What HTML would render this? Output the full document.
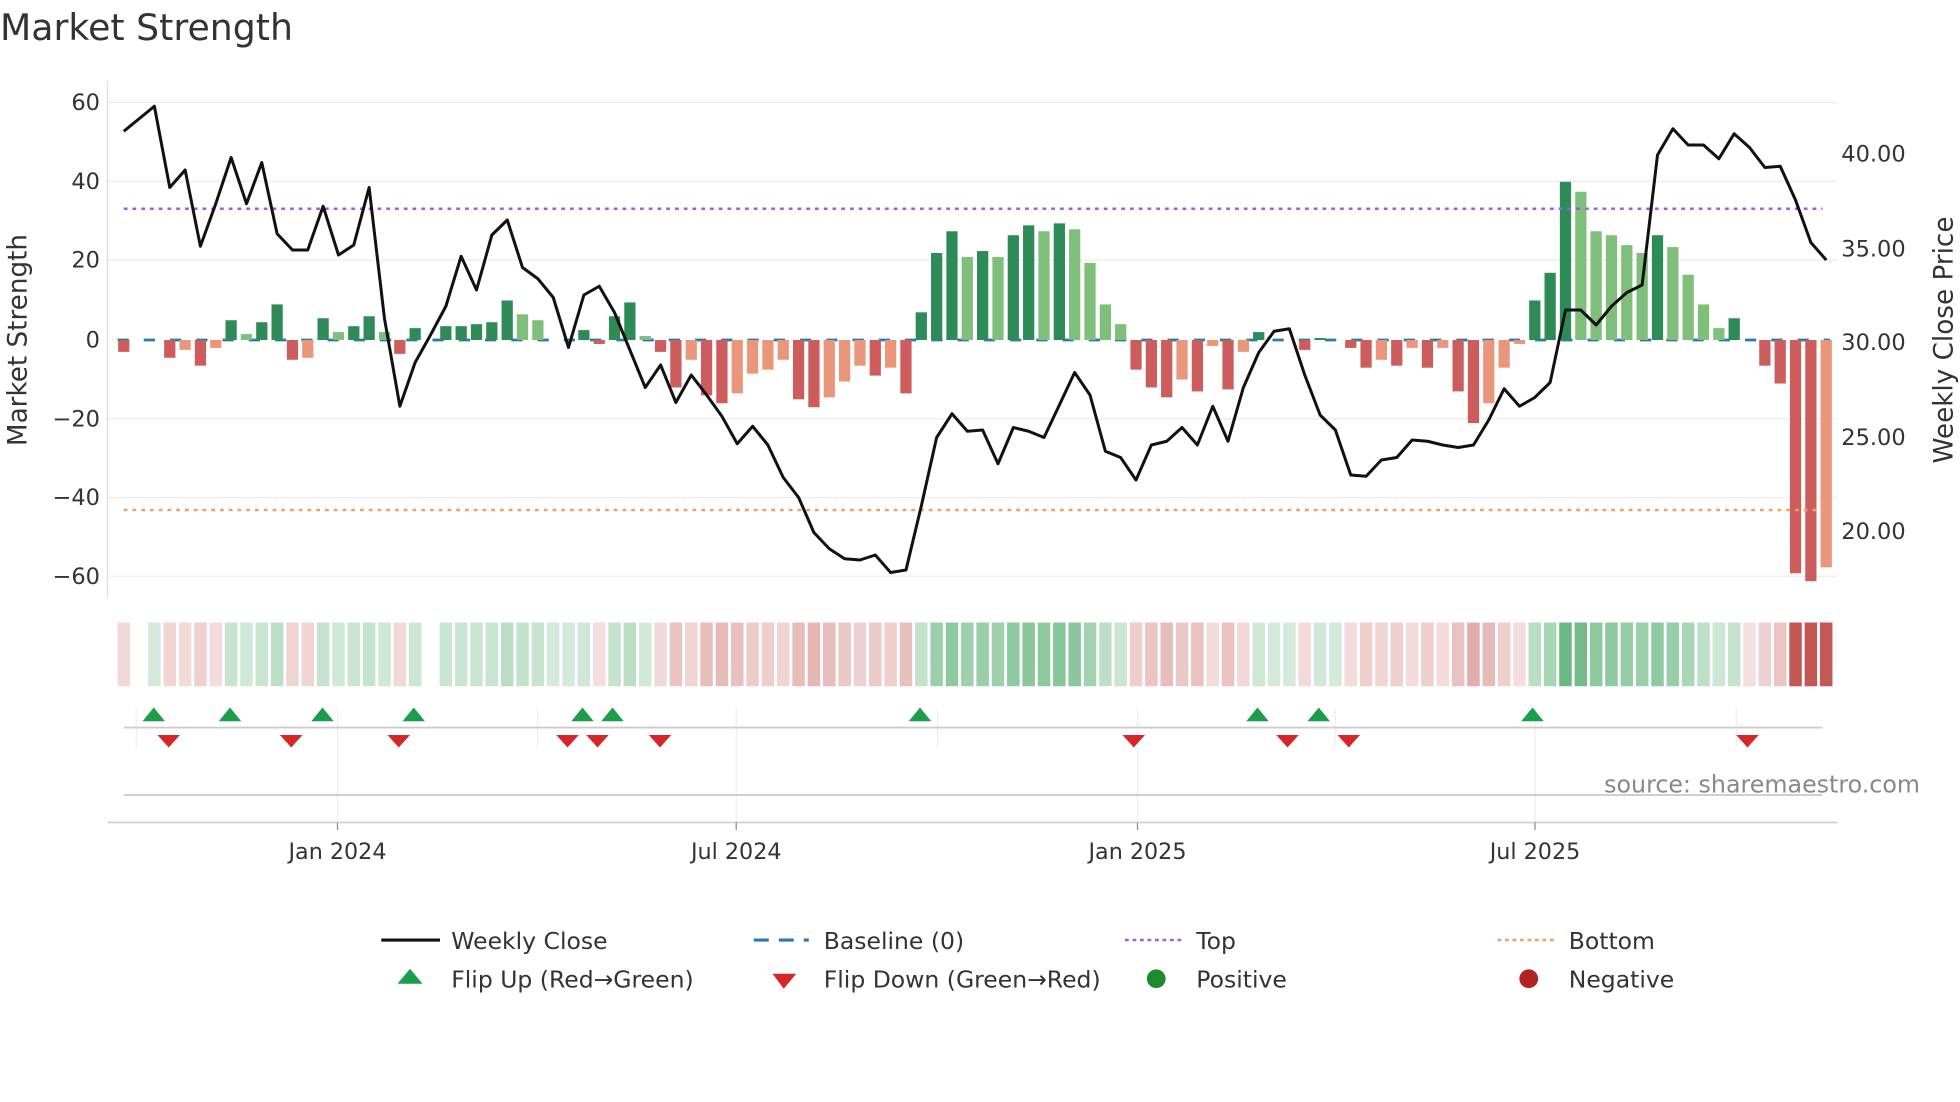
<!DOCTYPE html>
<html><head><meta charset="utf-8"><style>
html,body{margin:0;padding:0;background:#fff;}
svg{display:block;font-family:"DejaVu Sans","Liberation Sans",sans-serif;}
</style></head><body>
<svg id="s" width="1960" height="1102" viewBox="0 0 1568 881.6" xmlns="http://www.w3.org/2000/svg">
<rect width="1568" height="882" fill="#fff"/>
<text x="0" y="32" font-size="29" fill="#333">Market Strength</text>
<g stroke="#ebebeb" stroke-width="1">
<line x1="86" x2="1470" y1="82" y2="82"/><line x1="86" x2="1470" y1="145" y2="145"/>
<line x1="86" x2="1470" y1="208" y2="208"/><line x1="86" x2="1470" y1="335" y2="335"/>
<line x1="86" x2="1470" y1="398" y2="398"/><line x1="86" x2="1470" y1="461" y2="461"/>
</g>
<line x1="86" x2="86" y1="65" y2="478" stroke="#ddd"/>
<g font-size="18" fill="#333" text-anchor="end">
<text x="80" y="88">60</text><text x="80" y="151">40</text><text x="80" y="214">20</text>
<text x="80" y="278">0</text><text x="80" y="341">−20</text><text x="80" y="404">−40</text><text x="80" y="467">−60</text>
</g>
<g font-size="18" fill="#333">
<text x="1473" y="129">40.00</text><text x="1473" y="205">35.00</text><text x="1473" y="280">30.00</text>
<text x="1473" y="356">25.00</text><text x="1473" y="431">20.00</text>
</g>
<text transform="translate(21,272) rotate(-90)" font-size="21" fill="#333" text-anchor="middle">Market Strength</text>
<text transform="translate(1562,272) rotate(-90)" font-size="21" fill="#333" text-anchor="middle">Weekly Close Price</text>
<g id="bars"></g>
<line x1="99" x2="1458" y1="167" y2="167" stroke="#9b5de5" stroke-width="2" stroke-dasharray="3,4"/>
<line x1="99" x2="1458" y1="408" y2="408" stroke="#f0a060" stroke-width="2" stroke-dasharray="3,4"/>
<polyline id="price" fill="none" stroke="#111" stroke-width="2.4" stroke-linejoin="round"/>
<g id="strip"></g>
<g stroke="#eee" stroke-width="1">
<line x1="109" x2="109" y1="567" y2="598"/><line x1="430" x2="430" y1="567" y2="598"/>
<line x1="750" x2="750" y1="567" y2="598"/><line x1="1068" x2="1068" y1="567" y2="598"/>
<line x1="1389" x2="1389" y1="567" y2="598"/>
<line x1="270" x2="270" y1="567" y2="658"/><line x1="589" x2="589" y1="567" y2="658"/>
<line x1="910" x2="910" y1="567" y2="658"/><line x1="1228" x2="1228" y1="567" y2="658"/>
</g>
<line x1="99" x2="1458" y1="582" y2="582" stroke="#ccc" stroke-width="1.5"/>
<line x1="99" x2="1458" y1="636" y2="636" stroke="#ccc" stroke-width="1.5"/>
<g id="flips"></g>
<text x="1536" y="634" font-size="19" fill="#888" text-anchor="end">source: sharemaestro.com</text>
<line x1="86" x2="1470" y1="658" y2="658" stroke="#ccc" stroke-width="1.2"/>
<g stroke="#888"><line x1="270" x2="270" y1="658" y2="664"/><line x1="589" x2="589" y1="658" y2="664"/><line x1="910" x2="910" y1="658" y2="664"/><line x1="1228" x2="1228" y1="658" y2="664"/></g>
<g font-size="17.8" fill="#333" text-anchor="middle">
<text x="270" y="687">Jan 2024</text><text x="589" y="687">Jul 2024</text><text x="910" y="687">Jan 2025</text><text x="1228" y="687">Jul 2025</text>
</g>
<g font-size="18.8" fill="#333">
<line x1="305" x2="352" y1="752" y2="752" stroke="#111" stroke-width="2.5"/>
<text x="361" y="759">Weekly Close</text>
<line x1="603" x2="647" y1="752" y2="752" stroke="#2a7ab0" stroke-width="2.5" stroke-dasharray="12,8"/>
<text x="659" y="759">Baseline (0)</text>
<line x1="900" x2="945" y1="752" y2="752" stroke="#9b5de5" stroke-width="2" stroke-dasharray="3,3"/>
<text x="957" y="759">Top</text>
<line x1="1198" x2="1243" y1="752" y2="752" stroke="#f0a060" stroke-width="2" stroke-dasharray="3,3"/>
<text x="1255" y="759">Bottom</text>
<polygon points="328,775 338,787 318,787" fill="#1a9e4a"/>
<text x="361" y="790">Flip Up (Red→Green)</text>
<polygon points="618,779 637,779 627,791" fill="#d62728"/>
<text x="659" y="790">Flip Down (Green→Red)</text>
<circle cx="925" cy="783" r="7.5" fill="#1e8a2e"/>
<text x="957" y="790">Positive</text>
<circle cx="1223" cy="783" r="7.5" fill="#b22222"/>
<text x="1255" y="790">Negative</text>
</g>
</svg>
<script>
var NS="http://www.w3.org/2000/svg";
function el(t,a,p){var e=document.createElementNS(NS,t);for(var k in a)e.setAttribute(k,a[k]);p.appendChild(e);return e;}
var v=[-3,0,0.3,-4.5,-2.5,-6.5,-2,5,1.5,4.5,9,-5,-4.5,5.5,2,3.5,6,2,-3.5,3,0,3.5,3.5,4,4.5,10,6.5,5,0.3,0.3,2.5,-1,6,9.5,1,-3,-12,-5,-14,-16,-13.5,-8.5,-7.5,-5,-15,-17,-14.5,-10.5,-6.5,-9,-7,-13.5,7,22,27.5,21,22.5,21,26.5,29,27.5,29.5,28,19.5,9,4,-7.5,-12,-14.5,-10,-13,-1.5,-12.5,-3,2,0.3,0.3,-2.5,0.5,0.3,-2,-7,-5,-6.5,-2,-7,-2,-13,-21,-16,-7,-1,10,17,40,37.5,27.5,26.5,24,22,26.5,23.5,16.5,9,3,5.5,-0.3,-6.5,-11,-59,-61,-57.5];
var py=[105,95,85,150,136,197,163,126,163,130,187,200,200,165,204,196,150,255,325,290,268,245,205,232,188,176,214,223,238,278,236,229,250,280,310,292,322,300,316,333,355,341,356,382,398,426,439,447,448,444,458,456,405,350,331,345,344,371,342,345,350,324,298,316,361,366,384,356,353,342,356,325,353,310,282,265,263,300,332,344,380,381,368,366,352,353,356,358,356,336,311,325,318,306,248,248,260,245,234,228,124,103,116,116,127,107,118,134,133,160,194,208];
var bars=document.getElementById('bars'),strip=document.getElementById('strip');
var Z=272,S=3.163,W=12.27;
el('line',{x1:94,x2:1464,y1:Z,y2:Z,stroke:'#2a7ab0','stroke-width':2.2,'stroke-dasharray':'9,12'},bars);
for(var i=0;i<v.length;i++){
 var x=99+W*i,val=v[i],prev=i?v[i-1]:0,col;
 if(val>=0)col=(val>=prev)?'#2e8b57':'#7fbf7b';else col=(val<=prev)?'#cd5c5c':'#e9967a';
 if(Math.abs(val)>0.4){var h=Math.abs(val)*S;el('rect',{x:x-4.5,y:val>0?Z-h:Z,width:9,height:h,fill:col},bars);}
 var sc,op;
 if(val>0){sc='#3aa05a';op=0.22+0.55*Math.min(val/42,1);}else if(val<0){sc='#c0504d';op=0.18+0.78*Math.min(-val/58,1);if(-val<40)op=Math.min(op,0.5);}else{sc='#fff';op=1;}
 el('rect',{x:x-5,y:498,width:10,height:51,fill:sc,'fill-opacity':op},strip);
}
var pts=[];for(i=0;i<py.length;i++)pts.push((99+W*i).toFixed(1)+','+py[i]);
document.getElementById('price').setAttribute('points',pts.join(' '));
var f=document.getElementById('flips');
[123,184,258,331,466,490,736,1006,1055,1226].forEach(function(x){el('polygon',{points:x+',566 '+(x+9)+',577 '+(x-9)+',577',fill:'#1a9e4a'},f);});
[135,233,319,454,478,528,907,1030,1079,1398].forEach(function(x){el('polygon',{points:(x-9)+',588 '+(x+9)+',588 '+x+',598',fill:'#d62728'},f);});
</script>
</body></html>
